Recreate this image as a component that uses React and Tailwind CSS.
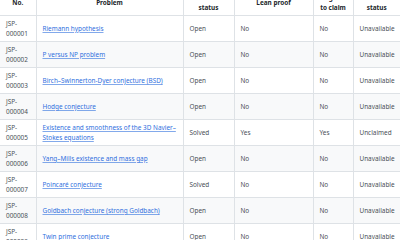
import React from "react";

const rows = [
  ["JSP-000001", "Riemann hypothesis", "Open", "No", "No", "Unavailable"],
  ["JSP-000002", "P versus NP problem", "Open", "No", "No", "Unavailable"],
  ["JSP-000003", "Birch–Swinnerton-Dyer conjecture (BSD)", "Open", "No", "No", "Unavailable"],
  ["JSP-000004", "Hodge conjecture", "Open", "No", "No", "Unavailable"],
  ["JSP-000005", "Existence and smoothness of the 3D Navier–Stokes equations", "Solved", "Yes", "Yes", "Unclaimed"],
  ["JSP-000006", "Yang–Mills existence and mass gap", "Open", "No", "No", "Unavailable"],
  ["JSP-000007", "Poincaré conjecture", "Solved", "No", "No", "Unavailable"],
  ["JSP-000008", "Goldbach conjecture (strong Goldbach)", "Open", "No", "No", "Unavailable"],
  ["JSP-000009", "Twin prime conjecture", "Open", "No", "No", "Unavailable"],
];

export default function App() {
  return (
    <div className="w-[400px] h-[240px] overflow-hidden bg-white" style={{ fontFamily: '"Noto Sans", "Open Sans", sans-serif' }}>
      <table className="-mt-[10px] w-[400px] table-fixed border-collapse text-[6.4px] leading-[10px]">
        <colgroup>
          <col className="w-[36px]" />
          <col className="w-[147px]" />
          <col className="w-[51px]" />
          <col className="w-[79px]" />
          <col className="w-[40px]" />
          <col className="w-[47px]" />
        </colgroup>
        <thead>
          <tr className="border-b border-[#dee2e6] text-[#212529] font-semibold">
            <th className="px-[5px] pt-[3px] pb-[2px] text-center align-middle border-r border-[#dee2e6]">No.</th>
            <th className="px-[5px] pt-[3px] pb-[2px] text-center align-middle border-r border-[#dee2e6]">Problem</th>
            <th className="px-[5px] pt-[3px] pb-[2px] text-center align-middle border-r border-[#dee2e6]">Current status</th>
            <th className="px-[5px] pt-[3px] pb-[2px] text-center align-middle border-r border-[#dee2e6]">Lean proof</th>
            <th className="px-[5px] pt-[3px] pb-[2px] text-center align-middle border-r border-[#dee2e6]">Eligible to claim</th>
            <th className="px-[5px] pt-[3px] pb-[2px] text-center align-middle">Claim status</th>
          </tr>
        </thead>
        <tbody className="text-[#495057]">
          {rows.map((r, i) => (
            <tr key={r[0]} className={"border-b border-[#dee2e6] " + (i % 2 === 1 ? "bg-[#f8f9fa]" : "bg-white")}>
              <td className="px-[6px] pt-[3px] pb-[2px] align-middle border-r border-[#dee2e6]">{r[0].slice(0, 4)}<br />{r[0].slice(4)}</td>
              <td className="pl-[6px] pr-[4px] pt-[3px] pb-[2px] align-middle border-r border-[#dee2e6]">
                <a href="#" className="text-[#2f6fde] underline decoration-[#2f6fde]/60 underline-offset-[1px]">{r[1]}</a>
              </td>
              <td className="px-[6px] pt-[3px] pb-[2px] align-middle border-r border-[#dee2e6]">{r[2]}</td>
              <td className="px-[6px] pt-[3px] pb-[2px] align-middle border-r border-[#dee2e6]">{r[3]}</td>
              <td className="px-[6px] pt-[3px] pb-[2px] align-middle border-r border-[#dee2e6]">{r[4]}</td>
              <td className="px-[6px] pt-[3px] pb-[2px] align-middle">{r[5]}</td>
            </tr>
          ))}
        </tbody>
      </table>
    </div>
  );
}
